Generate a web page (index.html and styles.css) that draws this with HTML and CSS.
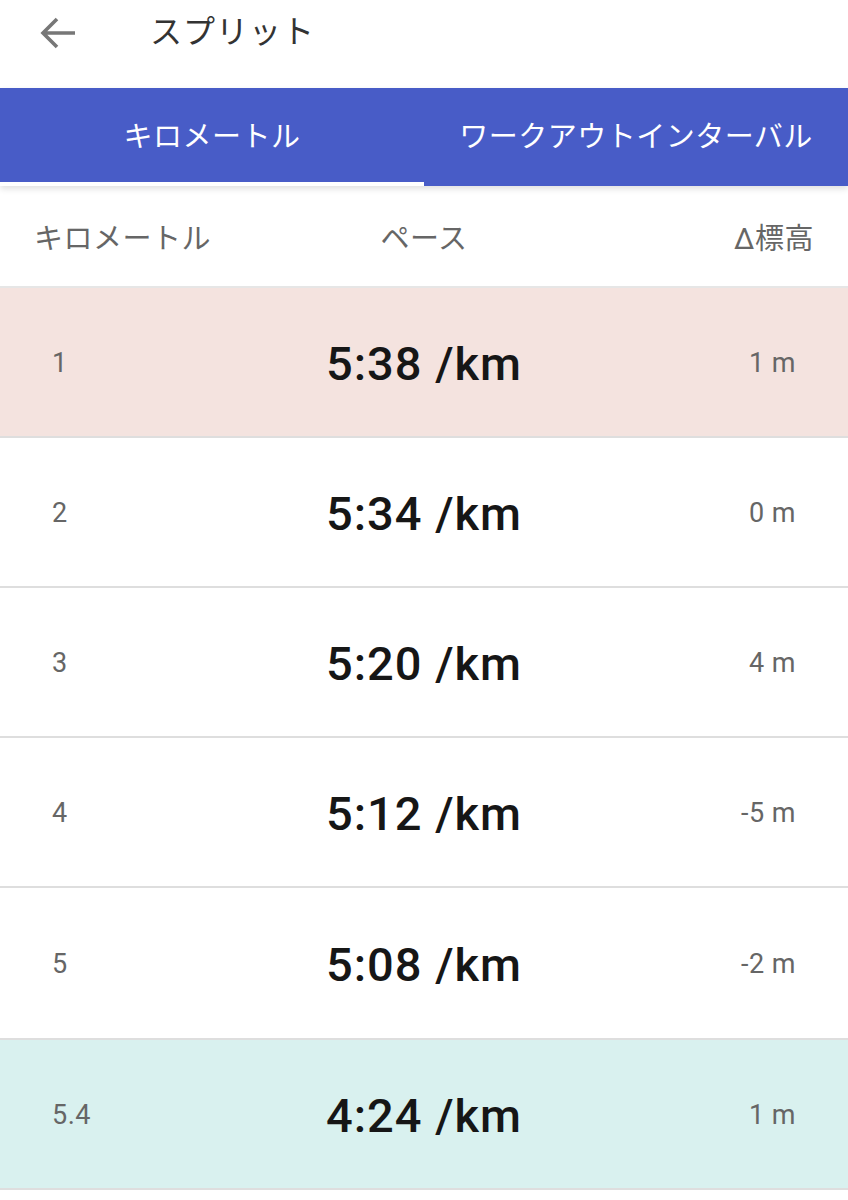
FILE: index.html
```html
<!DOCTYPE html>
<html lang="ja">
<head>
    <meta charset="UTF-8">
    <meta name="viewport" content="width=device-width, initial-scale=1.0">
    <title>スプリット</title>
    <link rel="stylesheet" href="styles.css">
</head>
<body>
    <header class="topbar">
        <svg class="back" width="38" height="34" viewBox="0 0 38 34">
            <path d="M36 17H4M18 3L4 17l14 14" fill="none" stroke="#777" stroke-width="3.6"/>
        </svg>
        <h1>スプリット</h1>
    </header>
    <nav class="tabs">
        <div class="tab active">キロメートル</div>
        <div class="tab">ワークアウトインターバル</div>
    </nav>
    <div class="colhead">
        <span class="c-km">キロメートル</span>
        <span class="c-pace">ペース</span>
        <span class="c-elev">Δ標高</span>
    </div>
    <ul class="splits">
        <li class="split slow"><span class="c-km">1</span><span class="c-pace">5:38 /km</span><span class="c-elev">1 m</span></li>
        <li class="split"><span class="c-km">2</span><span class="c-pace">5:34 /km</span><span class="c-elev">0 m</span></li>
        <li class="split"><span class="c-km">3</span><span class="c-pace">5:20 /km</span><span class="c-elev">4 m</span></li>
        <li class="split"><span class="c-km">4</span><span class="c-pace">5:12 /km</span><span class="c-elev">-5 m</span></li>
        <li class="split"><span class="c-km">5</span><span class="c-pace">5:08 /km</span><span class="c-elev">-2 m</span></li>
        <li class="split fast"><span class="c-km">5.4</span><span class="c-pace">4:24 /km</span><span class="c-elev">1 m</span></li>
    </ul>
</body>
</html>
```

FILE: styles.css
```css
*{
    box-sizing: border-box;
}

body{
    margin: 0;
    background: #fff;
    font-family: Roboto, "Noto Sans CJK JP", sans-serif;
    color: #1b1b1b;
}

.topbar{
    height: 88px;
    display: flex;
    align-items: flex-start;
    padding: 15px 0 0 39px;
}

.back{
    width: 38px;
    height: 34px;
    margin-top: 1px;
}

.topbar h1{
    margin: 0 0 0 73px;
    font-size: 32px;
    font-weight: 400;
    color: #333;
    line-height: 34px;
    letter-spacing: 1px;
}

.tabs{
    display: flex;
    height: 98px;
    background: #485cc7;
    box-shadow: 0 3px 6px rgba(0,0,0,0.12);
    position: relative;
}

.tab{
    flex: 1;
    display: flex;
    align-items: center;
    justify-content: center;
    color: #fff;
    font-size: 29px;
    letter-spacing: 0.5px;
    padding-bottom: 2px;
    border-bottom: 4px solid transparent;
}

.tab.active{
    border-bottom-color: #fff;
}

.colhead{
    height: 102px;
    display: flex;
    align-items: center;
    padding: 0 34px 0 34px;
    color: #666;
    font-size: 29px;
    letter-spacing: 0.5px;
    border-bottom: 2px solid #e6e6e6;
}

.colhead .c-km{
    flex: 1;
}

.colhead .c-pace{
    width: 200px;
    text-align: center;
}

.colhead .c-elev{
    flex: 1;
    text-align: right;
}

.splits{
    list-style: none;
    margin: 0;
    padding: 0;
}

.split{
    height: 150px;
    display: flex;
    align-items: center;
    padding: 2px 52px 0 52px;
    border-bottom: 2px solid #dedede;
}

.split:nth-child(5){
    height: 152px;
}

.split.slow{
    background: #f4e3df;
}

.split.fast{
    background: #d9f1ef;
}

.split .c-km{
    flex: 1;
    font-size: 27px;
    letter-spacing: 0.5px;
    color: #666;
}

.split .c-pace{
    width: 320px;
    text-align: center;
    font-size: 47px;
    font-weight: 500;
    letter-spacing: 1px;
    color: #161616;
}

.split .c-elev{
    flex: 1;
    text-align: right;
    font-size: 27px;
    letter-spacing: 0.5px;
    color: #666;
}
```
